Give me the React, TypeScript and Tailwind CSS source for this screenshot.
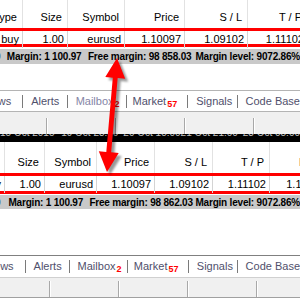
import React from "react";

const topHead = ["Type", "Size", "Symbol", "Price", "S / L", "T / P", "Price"];
const row = ["buy", "1.00", "eurusd", "1.10097", "1.09102", "1.11102", "1.10090"];

const HeadCell = ({ text }: { text: string }) => (
  <div className="flex justify-end items-center pt-[6px] pr-[5px] border-r border-[#e2e2e2] whitespace-nowrap">
    {text}
  </div>
);

const DataCell = ({ text }: { text: string }) => (
  <div className="flex justify-end items-center pr-[3px] border-r border-[#d4d4d4] whitespace-nowrap">
    {text}
  </div>
);

const Tabs = ({ shift, mailColor }: { shift: string; mailColor: string }) => (
  <div className={"flex items-center h-full text-[11px] text-[#50506c] whitespace-nowrap " + shift}>
    <div className="w-[57px] ml-[-30px] flex justify-end pr-[11px]">News</div>
    <div className="w-px h-[13px] bg-[#7a7a7a]" />
    <div className="w-[45px] pl-[8px]">Alerts</div>
    <div className="w-px h-[13px] bg-[#7a7a7a]" />
    <div className={"w-[60px] pl-[8px] flex items-end " + mailColor}>
      Mailbox
      <span className="text-[9px] font-bold text-[#ff0000] ml-[1px] mb-[-2px]">2</span>
    </div>
    <div className="w-px h-[13px] bg-[#7a7a7a]" />
    <div className="w-[63px] pl-[6px] flex items-end">
      Market
      <span className="text-[9px] font-bold text-[#ff0000] ml-[1px] mb-[-2px]">57</span>
    </div>
    <div className="w-px h-[13px] bg-[#7a7a7a]" />
    <div className="w-[50px] pl-[8px]">Signals</div>
    <div className="w-px h-[13px] bg-[#7a7a7a]" />
    <div className="pl-[8px]">Code Base</div>
  </div>
);

const Sep = () => (
  <div className="flex h-[16px]">
    <div className="w-px bg-[#a8a8a8]" />
    <div className="w-px bg-white" />
  </div>
);

export default function App() {
  return (
    <div className="relative w-[300px] h-[300px] overflow-hidden bg-white text-black font-['Liberation_Sans',sans-serif]">
      {/* upper capture */}
      <div className="grid grid-cols-[43px_45px_57px_60px_63px_60px_60px] ml-[-20px] h-[28px] text-[11px]">
        {topHead.map((t, i) => (
          <HeadCell key={i} text={t} />
        ))}
      </div>
      <div className="h-[3px] bg-[#ff0000]" />
      <div className="grid grid-cols-[43px_45px_57px_60px_63px_60px_60px] ml-[-20px] h-[13px] text-[11px]">
        {row.map((t, i) => (
          <DataCell key={i} text={t} />
        ))}
      </div>
      <div className="h-[3px] bg-[#ff0000]" />
      <div className="h-[2px]" />
      <div className="h-[15px] bg-[#c9c9c9] flex items-center text-[10px] tracking-[-0.2px] font-bold whitespace-nowrap">
        <div className="w-[13px] ml-[-5px]">0</div>
        <div className="w-[89px]">Margin: 1 100.97</div>
        <div className="w-[118px]">Free margin: 98 858.03</div>
        <div>Margin level: 9072.86%</div>
      </div>
      <div className="h-[26px]" />
      <div className="h-[22px] border-t border-[#b4b4b4] border-b">
        <Tabs shift="ml-[-3px]" mailColor="text-[#8585a6]" />
      </div>
      <div className="h-[22px] bg-[#f0f0f0] flex items-end">
        <div className="flex items-end w-full ml-[46px] gap-[67px] overflow-hidden">
          <Sep />
          <Sep />
          <Sep />
          <Sep />
        </div>
      </div>
      <div className="h-[8px] bg-black overflow-hidden">
        <div className="flex mt-[-7px] text-[10px] leading-[12px] text-[#c4c4c4] whitespace-nowrap">
          <div className="w-[62px]">15 Oct 2015</div>
          <div className="w-[63px]">19 Oct 23:00</div>
          <div className="w-[58px]">20 Oct 15:00</div>
          <div className="w-[63px]">21 Oct 21:00</div>
          <div>23 Oct 05:00</div>
        </div>
      </div>

      {/* lower capture */}
      <div className="grid grid-cols-[45px_40px_52px_58px_58px_57px_60px] ml-[-40px] h-[31px] text-[11px]">
        {topHead.map((t, i) => (
          <div
            key={i}
            className="flex justify-end items-center pt-[9px] pr-[5px] border-r border-[#e2e2e2] whitespace-nowrap"
          >
            {t}
          </div>
        ))}
      </div>
      <div className="h-[3px] bg-[#ff0000]" />
      <div className="grid grid-cols-[45px_40px_52px_58px_58px_57px_60px] ml-[-40px] h-[15px] text-[11px]">
        {row.map((t, i) => (
          <DataCell key={i} text={t} />
        ))}
      </div>
      <div className="h-[3px] bg-[#ff0000]" />
      <div className="h-[1px]" />
      <div className="h-[14px] bg-[#c9c9c9] flex items-center text-[10px] tracking-[-0.2px] font-bold whitespace-nowrap">
        <div className="w-[15px] ml-[-5px]">0</div>
        <div className="w-[90px]">Margin: 1 100.97</div>
        <div className="w-[118px]">Free margin: 98 862.03</div>
        <div>Margin level: 9072.86%</div>
      </div>
      <div className="h-[46px]" />
      <div className="h-[23px] border-t border-[#808080] border-b border-b-[#d0d0d0]">
        <Tabs shift="" mailColor="" />
      </div>
      <div className="h-[20px] bg-[#f0f0f0] flex items-end border-b border-[#a0a0a0]">
        <div className="flex items-end w-full ml-[49px] gap-[67px] overflow-hidden">
          <Sep />
          <Sep />
          <Sep />
          <Sep />
        </div>
      </div>

      {/* red double arrow */}
      <svg className="absolute inset-0" width="300" height="300" viewBox="0 0 300 300">
        <defs>
          <filter id="blur" x="-20%" y="-20%" width="140%" height="140%">
            <feGaussianBlur stdDeviation="1.2" />
          </filter>
        </defs>
        <polygon
          transform="translate(3 3)"
          filter="url(#blur)"
          fill="#000"
          opacity="0.4"
          points="117,58 125.2,78.8 117.7,78.1 111.2,152.3 118.7,153 107,172 98.8,151.2 106.3,151.9 112.8,77.7 105.3,77"
        />
        <polygon
          fill="#ff0000"
          points="117,58 125.2,78.8 117.7,78.1 111.2,152.3 118.7,153 107,172 98.8,151.2 106.3,151.9 112.8,77.7 105.3,77"
        />
      </svg>
    </div>
  );
}
